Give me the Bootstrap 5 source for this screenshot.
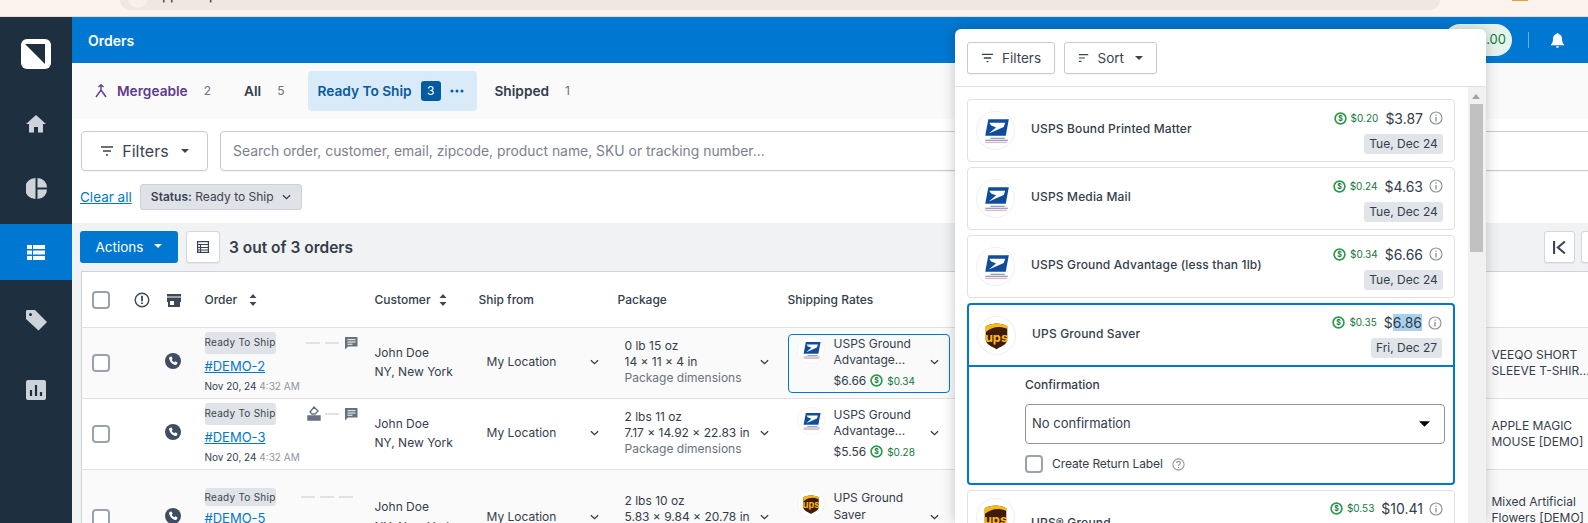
<!DOCTYPE html>
<html lang="en">
<head>
<meta charset="utf-8">
<title>Orders</title>
<link href="https://cdn.jsdelivr.net/npm/bootstrap@5.3.0/dist/css/bootstrap.min.css" rel="stylesheet">
<style>
html,body{height:523px;overflow:hidden}
body{position:relative;font-family:Inter,"Liberation Sans",sans-serif;font-size:12px;color:#333d4b;background:#fff}
.vq-chrome{height:17px;background:#fdf3ee;border-bottom:1px solid #e9dcd4;overflow:hidden;padding-left:120px}
.vq-addr{height:10px;width:1320px;flex:none;background:#f0e6e2;border-radius:0 0 12px 12px;overflow:hidden;padding-left:8px;color:#222;font-size:13px;line-height:14px}
.vq-addr-dot{width:20px;height:20px;border-radius:50%;background:#f7f0ec;margin:-12px 7px 0 0;flex:none}
.vq-addr-text{display:block;margin-top:-12px}
.vq-ext{width:16px;height:1px;background:#ef9a3c;margin-left:72px}
.vq-shell{height:506px}
.vq-side{width:72px;flex:none;background:#1e3040;color:#ced3d9;padding-top:22px}
.vq-logo{width:30px;height:30px;background:#fff;border-radius:6px;margin:0 auto 27px}
.vq-nav{height:56px;margin-bottom:8px}
.vq-nav-active{background:#0078d2;color:#fff}
.vq-nav-tag{margin-top:4px;margin-bottom:14px}
.vq-main{flex:1 1 auto;min-width:0;overflow:hidden}
.vq-main>*{flex:none}
.vq-top{height:46px;background:#0078d2;color:#fff;padding:0 24px 0 16px}
.vq-title{font-size:14px;font-weight:600}
.vq-wallet{width:68px;height:32px;background:#e6f4ec;border-radius:16px;color:#137a3c;font-size:13px;padding-right:6px}
.vq-sep{width:1px;height:16px;background:#6ab0e4;margin:0 22px 0 16px}
.vq-tabs{height:56px;background:#fafafa;padding:8px 0 8px 23px;font-size:13.7px;font-weight:600;white-space:nowrap}
.vq-tab-count{font-weight:400;color:#69727e;font-size:12px;margin-left:16px}
.vq-merge{color:#5f3b8e}
.vq-merge-icon{margin-right:10px;flex:none}
.vq-tab-all{margin-left:33px}
.vq-tab-on{width:169px;height:40px;background:#d9eaf8;border-radius:4px;color:#085a9e;padding:0 14px 0 9px;margin:0 17px 0 24px}
.vq-tab-badge{width:20px;height:20px;background:#005ba1;color:#fff;border-radius:3px;font-weight:400;font-size:12px;margin-left:9px;flex:none}
.vq-dots{margin-left:9px;flex:none}
.vq-search{padding:12px 0 0 9px;height:65px;margin-right:-6px}
.vq-filter{width:127px;height:40px;background:#fff;border:1px solid #c7cbd1;border-radius:4px;font-size:16px;color:#3b4452;box-shadow:0 1px 1px rgba(0,0,0,.04);padding:0;flex:none}
.vq-input{height:40px;margin-left:12px;border:1px solid #c7cbd1;border-radius:4px;font-size:13.9px;padding:0 12px;box-shadow:0 1px 1px rgba(0,0,0,.04);width:auto;min-width:0}
.vq-input::placeholder{color:#7b828c}
.vq-chips{height:39px;padding:0 0 13px 8px}
.vq-clear{color:#0078d2;font-size:13.5px;margin-right:8px}
.vq-chip{height:26px;width:162px;background:#dfe2e6;border:1px solid #ccd0d5;border-radius:3px;font-size:12px;color:#3a4350;padding:0}
.vq-bar{height:48px;background:#f1f2f4;padding:8px 0 0 8px}
.vq-actions{width:98px;height:32px;background:#0078d2;border:0;color:#fff;font-size:13.5px;border-radius:3px;padding:0}
.vq-actions::after{margin-left:11px}
.vq-iconbtn{width:34px;height:32px;background:#fff;border:1px solid #d3d6db;border-radius:3px;padding:0;margin-left:8px;color:#3b4452;box-shadow:0 1px 1px rgba(0,0,0,.06);flex:none}
.vq-iconbtn-r{width:31px;margin-left:6px}
.vq-iconbtn-last{margin-right:-24px}
.vq-count{font-size:15.5px;font-weight:600;margin:0 0 7px 9px;color:#333d4b}
.vq-tablewrap{padding-left:9px;background:#f1f2f4}
.vq-table{table-layout:fixed;width:1623px;margin:0;font-size:12px;color:#333d4b;background:#fff;border-top:1px solid #ced2d8;border-left:1px solid #ced2d8}
.vq-table th,.vq-table td{padding:0 8px;vertical-align:middle;border-bottom:1px solid #dfe1e5;font-weight:500;box-shadow:none}
.vq-table th{height:56px;font-size:12px}
.vq-table th.vq-th-ship{padding-left:7px}
.vq-table td.vq-cell-phone{padding:0 0 0 6px}
.vq-table td.vq-cell-cb,.vq-table th.vq-cell-cb{padding:0 0 0 10px}
.vq-row td{height:71px;background:#fff}
.vq-row-odd td{background:#fafafa}
.vq-row-tall td{height:96px}
.form-check-input.vq-check{width:18px;height:18px;margin:0;border:2px solid #9aa2ad;border-radius:4px;background-color:#fff;flex:none}
.vq-status{height:22px;width:71px;background:#e0e3e7;border-radius:3px;font-size:10px;font-weight:400;color:#3a4350;letter-spacing:.25px;white-space:nowrap;flex:none}
.vq-status-low{height:18px}
.vq-id{color:#0078d2;font-size:13px;font-weight:400;line-height:24px}
.vq-date{font-size:10px;font-weight:400;line-height:14px;margin:1px 0 2px;white-space:nowrap}
.vq-date span{color:#8f96a0}
.vq-dash{width:14px;height:2px;background:#dfe2e6;margin-right:5px}
.vq-marks{width:153px}
.vq-stack{line-height:19.5px;font-weight:400;font-size:12px;padding-bottom:2px}
.vq-pkg{line-height:16px;font-weight:400;font-size:12px;padding:0 3px 2px 7px;white-space:nowrap}
.vq-muted{color:#69727e}
.vq-from{padding:0 3px 2px 7px;font-weight:400}
.vq-rate{width:162px;height:59px;padding:1px 10px 3px 8px;border:1px solid transparent;border-radius:4px;font-weight:400}
.vq-rate-on{border-color:#0078d2}
.vq-rate-logo{width:28px;flex:none;margin-right:9px}
.vq-rate-name{line-height:16.5px;font-size:12px}
.vq-rate-price{font-size:12px;line-height:18px;margin-top:3px}
.vq-save{color:#13793a;font-size:10px;font-weight:400}
.vq-table td.vq-product{font-weight:400;font-size:12px;line-height:16px;padding-left:7px}
.vq-pop{position:absolute;left:955px;top:29px;width:531px;height:494px;background:#fff;border-radius:6px 6px 0 0;box-shadow:0 0 14px rgba(0,0,0,.22);overflow:hidden}
.vq-pop-head{height:58px;flex:none;padding:13px 12px 0;border-bottom:1px solid #dfe1e5}
.vq-pop-btn{height:32px;background:#fff;border:1px solid #c7cbd1;border-radius:3px;font-size:13.5px;color:#3b4452;padding:0;box-shadow:0 1px 1px rgba(0,0,0,.05)}
.vq-pop-f{width:88px;margin-right:9px}
.vq-pop-s{width:93px}
.vq-pop-list{width:513px;flex:none;padding:12px 13px 0 12px}
.vq-card{height:63px;border:1px solid #dfe1e5;border-radius:4px;margin-bottom:5px;padding:7px 11px 7px 8px;font-size:12px;font-weight:500}
.vq-card-on{height:182px;border:2px solid #0078d2;padding:0}
.vq-card-top{height:62px;padding:6px 11px 6px 8px;border-bottom:2px solid #0078d2}
.vq-card-next{padding-top:7px}
.vq-card-logo{width:39px;height:39px;flex:none;margin-right:16px}
.vq-name{flex:1 1 auto;letter-spacing:.15px;margin-bottom:3px}
.vq-price{font-size:14px;font-weight:400;margin:0 6px 0 7px}
.vq-sel{background:#a8d1ee}
.vq-chipdate{height:20px;width:79px;background:#e1e4e8;border-radius:3px;font-size:12px;font-weight:400;margin-top:5px}
.vq-chipdate-f{width:71px}
.vq-conf{padding:9px 8px 0 56px}
.vq-conf-label{font-size:12px;font-weight:500;height:28px}
.form-select.vq-select{height:40px;border:1px solid #8e96a0;border-radius:4px;font-size:13px;padding:0 6px;color:#333d4b;background-image:url("data:image/svg+xml,%3Csvg xmlns='http://www.w3.org/2000/svg' viewBox='0 0 12 6'%3E%3Cpath d='M0 0h12L6 6z' fill='%23000'/%3E%3C/svg%3E");background-size:11px 6px;background-position:right 14px center}
.vq-return{margin-top:11px;font-weight:400;font-size:12px;letter-spacing:-.1px}
.vq-return label{margin:0 9px 0 9px}
.vq-track{width:18px;flex:none;background:#f1f1f1;position:relative;padding:17px 3px 0 2px}
.vq-thumb{height:148px;background:#c1c1c1}
.vq-arrow{position:absolute;left:4px;top:7px;border:4px solid transparent;border-top:0;border-bottom:5px solid #a3a3a3}
.vq-defs{position:absolute;width:0;height:0}
</style>
</head>
<body>
<svg class="vq-defs" aria-hidden="true">
  <symbol id="i-usps" viewBox="0 0 38 38">
    <circle cx="19" cy="19" r="18.5" fill="#fff" stroke="#f0f0f0"/>
    <path d="M12 8h20l-3 16H9z" fill="#0f4d9c"/>
    <path d="M13 11.500h15.500l-1.500 4-14.500 6.500 7-6-5-2z" fill="#fff"/>
    <path d="M14 26.500h14M9 28.500h22" stroke="#7183ad" stroke-width="1"/>
    <path d="M9 30.500h21" stroke="#e39cab" stroke-width="1"/>
  </symbol>
  <symbol id="i-ups" viewBox="0 0 38 38">
    <circle cx="19" cy="19" r="18.500" fill="#fff" stroke="#f0f0f0"/>
    <path d="M8.500 10c6.500-3.500 14.500-3.500 21 0v13c0 5-6.500 7-10.500 9.500-4-2.500-10.500-4.500-10.500-9.500z" fill="#3e1c09"/>
    <path d="M8.500 10c6.500-3.500 14.500-3.500 21 0v2.500c-7.500-3-14-2.500-21 3z" fill="#fdb813"/>
    <text x="19" y="25" font-family="Inter,sans-serif" font-size="12.500" font-weight="700" fill="#fdb813" text-anchor="middle">ups</text>
  </symbol>
  <symbol id="i-save" viewBox="0 0 14 14">
    <circle cx="7" cy="7" r="5.800" fill="#fff" stroke="#2a9a4e" stroke-width="1.800"/>
    <text x="7" y="9.700" font-family="Inter,sans-serif" font-size="7.500" font-weight="700" fill="#13793a" text-anchor="middle">$</text>
  </symbol>
  <symbol id="i-info" viewBox="0 0 14 14">
    <circle cx="7" cy="7" r="6" fill="none" stroke="#8f96a0" stroke-width="1.200"/>
    <path d="M7 6v4.500M7 3.400v1.300" stroke="#8f96a0" stroke-width="1.400"/>
  </symbol>
  <symbol id="i-chev" viewBox="0 0 10 6"><path d="M1 1l4 3.800L9 1" fill="none" stroke="currentColor" stroke-width="1.500"/></symbol>
  <symbol id="i-phone" viewBox="0 0 16 16">
    <circle cx="8" cy="8" r="8" fill="#3f4d63"/>
    <path d="M5 3.800l1.500-.4 1.200 2.300-1 1c.5 1 1.500 2 2.600 2.600l1-1 2.200 1.200-.4 1.500c-.3.900-1.300 1.200-2.200.9C7 11 5 9 4.200 6c-.3-.9 0-1.900.8-2.200z" fill="#fff"/>
  </symbol>
  <symbol id="i-chat" viewBox="0 0 14 14">
    <path d="M1 1h12.500v9.500H4L1 13.500z" fill="#67717f"/>
    <path d="M3.500 3.700h8M3.500 6h8M3.500 8.200h5" stroke="#fff" stroke-width="1"/>
  </symbol>
  <symbol id="i-lines" viewBox="0 0 14 10"><path d="M1 1h12M3 5h8M6 9h2" stroke="currentColor" stroke-width="1.400"/></symbol>
  <symbol id="i-sortl" viewBox="0 0 14 10"><path d="M1 1h11M1 5h7M1 9h3" stroke="currentColor" stroke-width="1.400"/></symbol>
  <symbol id="i-sort" viewBox="0 0 8 12"><path d="M4 0l3.500 4h-7zM4 12l3.500-4h-7z" fill="#3f4857"/></symbol>
</svg>

<div class="vq-chrome d-flex align-items-start">
  <div class="vq-addr d-flex"><span class="vq-addr-dot"></span><span class="vq-addr-text">app.veeqo.com</span></div>
  <span class="vq-ext"></span>
</div>

<div class="vq-shell d-flex">
  <nav class="vq-side d-flex flex-column">
    <div class="vq-logo d-flex align-items-center justify-content-center">
      <svg width="24" height="24" viewBox="0 0 24 24"><path d="M1 2h20v20z" fill="#1e3040"/></svg>
    </div>
    <div class="vq-nav d-flex align-items-center justify-content-center">
      <svg width="20" height="18" viewBox="0 0 20 18" fill="currentColor"><path d="M10 0L0 9h3v8.500h5V12h4v5.500h5V9h3z"/></svg>
    </div>
    <div class="vq-nav d-flex align-items-center justify-content-center">
      <svg width="21" height="21" viewBox="0 0 21 21" fill="currentColor"><path d="M9.500 0v21a10.500 10.500 0 0 1 0-21zM11.500 0a9.500 9.500 0 0 1 9.500 9.500h-9.500zM11.500 11.500H21a9.500 9.500 0 0 1-9.500 9.500z"/></svg>
    </div>
    <div class="vq-nav vq-nav-active d-flex align-items-center justify-content-center">
      <svg width="18" height="15" viewBox="0 0 18 15" fill="currentColor"><path d="M0 0h5v4H0zM6 0h12v4H6zM0 5.500h5v4H0zM6 5.500h12v4H6zM0 11h5v4H0zM6 11h12v4H6z"/></svg>
    </div>
    <div class="vq-nav vq-nav-tag d-flex align-items-center justify-content-center">
      <svg width="21" height="21" viewBox="0 0 21 21" fill="currentColor"><path d="M0 1.500C0 .5.500 0 1.500 0H9l12 12-8.500 8.500L0 9zM4.500 3a1.500 1.500 0 1 0 0 3 1.500 1.500 0 0 0 0-3z"/></svg>
    </div>
    <div class="vq-nav d-flex align-items-center justify-content-center">
      <svg width="20" height="20" viewBox="0 0 20 20"><rect width="20" height="20" rx="2" fill="currentColor"/><path d="M5 10v6M10 5v11M15 12v4" stroke="#1e3040" stroke-width="2.200"/></svg>
    </div>
  </nav>

  <main class="vq-main d-flex flex-column">
    <header class="vq-top d-flex align-items-center">
      <span class="vq-title flex-grow-1">Orders</span>
      <span class="vq-wallet d-flex align-items-center justify-content-end">$0.00</span>
      <span class="vq-sep"></span>
      <svg width="13" height="15" viewBox="0 0 13 15" fill="#fff"><path d="M6.500 0c.7 0 1 .5 1 1.100C10 1.600 11 3.600 11 6c0 3 1 4.500 2 5.500v.8H0v-.8C1 10.500 2 9 2 6c0-2.400 1-4.400 3.500-4.900C5.500.5 5.800 0 6.500 0zM5 13.200h3a1.500 1.500 0 0 1-3 0z"/></svg>
    </header>

    <div class="vq-tabs d-flex align-items-center">
      <svg class="vq-merge vq-merge-icon" width="12" height="14" viewBox="0 0 12 14" fill="none" stroke="currentColor" stroke-width="1.400"><path d="M6 1v5L1 13M6 6l5 7M3.500 3L6 .8 8.500 3"/></svg>
      <span class="vq-merge">Mergeable</span>
      <span class="vq-tab-count">2</span>
      <span class="vq-tab-all">All</span>
      <span class="vq-tab-count">5</span>
      <div class="vq-tab-on d-flex align-items-center">
        <span>Ready To Ship</span>
        <span class="vq-tab-badge d-flex align-items-center justify-content-center">3</span>
        <svg class="vq-dots" width="14" height="4" viewBox="0 0 14 4" fill="#085a9e"><circle cx="2" cy="2" r="1.500"/><circle cx="7" cy="2" r="1.500"/><circle cx="12" cy="2" r="1.500"/></svg>
      </div>
      <span>Shipped</span>
      <span class="vq-tab-count">1</span>
    </div>

    <div class="vq-search d-flex">
      <button type="button" class="btn vq-filter dropdown-toggle d-flex align-items-center justify-content-center gap-2">
        <svg width="14" height="10"><use href="#i-lines"/></svg><span>Filters</span>
      </button>
      <input class="form-control vq-input flex-grow-1" type="text" placeholder="Search order, customer, email, zipcode, product name, SKU or tracking number...">
    </div>

    <div class="vq-chips d-flex align-items-center">
      <a href="#" class="vq-clear">Clear all</a>
      <button type="button" class="btn vq-chip d-flex align-items-center justify-content-center gap-2">
        <span><b class="fw-semibold">Status:</b> Ready to Ship</span>
        <svg width="9" height="6"><use href="#i-chev"/></svg>
      </button>
    </div>

    <div class="vq-bar d-flex align-items-start">
      <button type="button" class="btn vq-actions dropdown-toggle">Actions</button>
      <button type="button" class="btn vq-iconbtn d-flex align-items-center justify-content-center">
        <svg width="12" height="12" viewBox="0 0 12 12" fill="none" stroke="currentColor" stroke-width="1.200"><rect x=".6" y=".6" width="10.800" height="10.800"/><path d="M.6 3.500h10.800M.6 6.500h10.800M.6 9h10.800M3.500 3.500v8"/></svg>
      </button>
      <span class="vq-count align-self-center">3 out of 3 orders</span>
      <span class="flex-grow-1"></span>
      <button type="button" class="btn vq-iconbtn vq-iconbtn-r d-flex align-items-center justify-content-center">
        <svg width="13" height="13" viewBox="0 0 12 12" fill="none" stroke="currentColor" stroke-width="1.900"><path d="M1 0v12M11 .5L4.500 6l6.500 5.500"/></svg>
      </button>
      <button type="button" class="btn vq-iconbtn vq-iconbtn-r vq-iconbtn-last"></button>
    </div>

    <div class="vq-tablewrap">
      <table class="table vq-table">
        <colgroup><col style="width:44px"><col style="width:33px"><col style="width:38px"><col style="width:170px"><col style="width:105px"><col style="width:138px"><col style="width:170px"><col style="width:705px"><col style="width:220px"></colgroup>
        <thead>
          <tr>
            <th class="vq-cell-cb"><input class="form-check-input vq-check d-block" type="checkbox" aria-label="Select all"></th>
            <th class="ps-2 pe-0"><svg width="16" height="16" viewBox="0 0 16 16" fill="none" stroke="#3f4857" stroke-width="1.400"><circle cx="8" cy="8" r="6.800"/><path d="M8 3.800v5.400M8 10.500v1.600" stroke-width="1.800"/></svg></th>
            <th class="ps-2 pe-0"><svg width="14" height="13" viewBox="0 0 14 13" fill="#3f4857"><path d="M0 0h14v2.500H0zM0 3.500h14V8h-1v5H1V8H0zM3 7v4h4V7z"/></svg></th>
            <th><span class="d-flex align-items-center gap-2">Order <svg width="8" height="12" class="ms-1"><use href="#i-sort"/></svg></span></th>
            <th><span class="d-flex align-items-center gap-2">Customer <svg width="8" height="12"><use href="#i-sort"/></svg></span></th>
            <th class="vq-th-ship">Ship from</th>
            <th>Package</th>
            <th>Shipping Rates</th>
            <th></th>
          </tr>
        </thead>
        <tbody>
          <tr class="vq-row vq-row-odd">
            <td class="vq-cell-cb"><input class="form-check-input vq-check d-block" type="checkbox" aria-label="Select DEMO-2"></td>
            <td></td>
            <td class="vq-cell-phone"><svg width="16" height="16" class="d-block mb-1"><use href="#i-phone"/></svg></td>
            <td>
              <div class="vq-marks d-flex align-items-center">
                <span class="vq-status d-flex align-items-center justify-content-center">Ready To Ship</span>
                <span class="flex-grow-1"></span><span class="vq-dash"></span><span class="vq-dash"></span><svg width="14" height="14"><use href="#i-chat"/></svg>
              </div>
              <a href="#" class="vq-id d-block">#DEMO-2</a>
              <div class="vq-date">Nov 20, 24 <span>4:32 AM</span></div>
            </td>
            <td><div class="vq-stack">John Doe<br>NY, New York</div></td>
            <td><div class="vq-from d-flex align-items-center justify-content-between"><span>My Location</span><svg width="9" height="6"><use href="#i-chev"/></svg></div></td>
            <td><div class="vq-pkg d-flex align-items-center justify-content-between"><span>0 lb 15 oz<br>14 × 11 × 4 in<br><span class="vq-muted">Package dimensions</span></span><svg width="9" height="6"><use href="#i-chev"/></svg></div></td>
            <td>
              <div class="vq-rate vq-rate-on d-flex">
                <svg class="vq-rate-logo" height="28"><use href="#i-usps"/></svg>
                <div class="flex-grow-1"><div class="vq-rate-name">USPS Ground<br>Advantage...</div><div class="vq-rate-price d-flex align-items-center"><span>$6.66</span><svg width="13" height="13" class="mx-1"><use href="#i-save"/></svg><span class="vq-save">$0.34</span></div></div>
                <svg width="9" height="6" class="align-self-center"><use href="#i-chev"/></svg>
              </div>
            </td>
            <td class="vq-product">VEEQO SHORT<br>SLEEVE T-SHIR...</td>
          </tr>
          <tr class="vq-row">
            <td class="vq-cell-cb"><input class="form-check-input vq-check d-block" type="checkbox" aria-label="Select DEMO-3"></td>
            <td></td>
            <td class="vq-cell-phone"><svg width="16" height="16" class="d-block mb-1"><use href="#i-phone"/></svg></td>
            <td>
              <div class="vq-marks d-flex align-items-center">
                <span class="vq-status d-flex align-items-center justify-content-center">Ready To Ship</span>
                <span class="flex-grow-1"></span>
                <svg width="14" height="15" viewBox="0 0 14 15" fill="none" stroke="#67717f" stroke-width="1.400" class="me-1"><path d="M7 1l4 4-3 3H5L3 6z"/><path d="M1 10h12v4H1z" fill="#67717f"/></svg>
                <span class="vq-dash"></span><svg width="14" height="14"><use href="#i-chat"/></svg>
              </div>
              <a href="#" class="vq-id d-block">#DEMO-3</a>
              <div class="vq-date">Nov 20, 24 <span>4:32 AM</span></div>
            </td>
            <td><div class="vq-stack">John Doe<br>NY, New York</div></td>
            <td><div class="vq-from d-flex align-items-center justify-content-between"><span>My Location</span><svg width="9" height="6"><use href="#i-chev"/></svg></div></td>
            <td><div class="vq-pkg d-flex align-items-center justify-content-between"><span>2 lbs 11 oz<br>7.17 × 14.92 × 22.83 in<br><span class="vq-muted">Package dimensions</span></span><svg width="9" height="6"><use href="#i-chev"/></svg></div></td>
            <td>
              <div class="vq-rate d-flex">
                <svg class="vq-rate-logo" height="28"><use href="#i-usps"/></svg>
                <div class="flex-grow-1"><div class="vq-rate-name">USPS Ground<br>Advantage...</div><div class="vq-rate-price d-flex align-items-center"><span>$5.56</span><svg width="13" height="13" class="mx-1"><use href="#i-save"/></svg><span class="vq-save">$0.28</span></div></div>
                <svg width="9" height="6" class="align-self-center"><use href="#i-chev"/></svg>
              </div>
            </td>
            <td class="vq-product">APPLE MAGIC<br>MOUSE [DEMO]</td>
          </tr>
          <tr class="vq-row vq-row-odd vq-row-tall">
            <td class="vq-cell-cb"><input class="form-check-input vq-check d-block" type="checkbox" aria-label="Select DEMO-5"></td>
            <td></td>
            <td class="vq-cell-phone"><svg width="16" height="16" class="d-block mb-1"><use href="#i-phone"/></svg></td>
            <td>
              <div class="vq-marks d-flex align-items-center">
                <span class="vq-status vq-status-low d-flex align-items-center justify-content-center">Ready To Ship</span>
                <span class="flex-grow-1"></span><span class="vq-dash"></span><span class="vq-dash"></span><span class="vq-dash"></span>
              </div>
              <a href="#" class="vq-id d-block">#DEMO-5</a>
              <div class="vq-date">Nov 20, 24 <span>4:32 AM</span></div>
            </td>
            <td><div class="vq-stack">John Doe<br>NY, New York</div></td>
            <td><div class="vq-from d-flex align-items-center justify-content-between"><span>My Location</span><svg width="9" height="6"><use href="#i-chev"/></svg></div></td>
            <td><div class="vq-pkg d-flex align-items-center justify-content-between"><span>2 lbs 10 oz<br>5.83 × 9.84 × 20.78 in<br><span class="vq-muted">Package dimensions</span></span><svg width="9" height="6"><use href="#i-chev"/></svg></div></td>
            <td>
              <div class="vq-rate d-flex">
                <svg class="vq-rate-logo" height="28"><use href="#i-ups"/></svg>
                <div class="flex-grow-1"><div class="vq-rate-name">UPS Ground<br>Saver</div></div>
                <svg width="9" height="6" class="align-self-center"><use href="#i-chev"/></svg>
              </div>
            </td>
            <td class="vq-product">Mixed Artificial<br>Flowers [DEMO]<br>Crystal</td>
          </tr>
        </tbody>
      </table>
    </div>
  </main>
</div>

<aside class="vq-pop d-flex flex-column">
  <div class="vq-pop-head d-flex align-items-start">
    <button type="button" class="btn vq-pop-btn vq-pop-f d-flex align-items-center justify-content-center gap-2"><svg width="13" height="10"><use href="#i-lines"/></svg><span>Filters</span></button>
    <button type="button" class="btn vq-pop-btn vq-pop-s dropdown-toggle d-flex align-items-center justify-content-center gap-2"><svg width="12" height="10"><use href="#i-sortl"/></svg><span>Sort</span></button>
  </div>
  <div class="d-flex flex-grow-1 overflow-hidden">
    <div class="vq-pop-list">
      <div class="vq-card d-flex align-items-center">
        <svg class="vq-card-logo"><use href="#i-usps"/></svg>
        <span class="vq-name">USPS Bound Printed Matter</span>
        <div class="d-flex flex-column align-items-end">
          <div class="d-flex align-items-center"><svg width="13" height="13" class="me-1"><use href="#i-save"/></svg><span class="vq-save">$0.20</span><span class="vq-price">$3.87</span><svg width="14" height="14"><use href="#i-info"/></svg></div>
          <span class="vq-chipdate d-flex align-items-center justify-content-center">Tue, Dec 24</span>
        </div>
      </div>
      <div class="vq-card d-flex align-items-center">
        <svg class="vq-card-logo"><use href="#i-usps"/></svg>
        <span class="vq-name">USPS Media Mail</span>
        <div class="d-flex flex-column align-items-end">
          <div class="d-flex align-items-center"><svg width="13" height="13" class="me-1"><use href="#i-save"/></svg><span class="vq-save">$0.24</span><span class="vq-price">$4.63</span><svg width="14" height="14"><use href="#i-info"/></svg></div>
          <span class="vq-chipdate d-flex align-items-center justify-content-center">Tue, Dec 24</span>
        </div>
      </div>
      <div class="vq-card d-flex align-items-center">
        <svg class="vq-card-logo"><use href="#i-usps"/></svg>
        <span class="vq-name">USPS Ground Advantage (less than 1lb)</span>
        <div class="d-flex flex-column align-items-end">
          <div class="d-flex align-items-center"><svg width="13" height="13" class="me-1"><use href="#i-save"/></svg><span class="vq-save">$0.34</span><span class="vq-price">$6.66</span><svg width="14" height="14"><use href="#i-info"/></svg></div>
          <span class="vq-chipdate d-flex align-items-center justify-content-center">Tue, Dec 24</span>
        </div>
      </div>
      <div class="vq-card vq-card-on">
        <div class="vq-card-top d-flex align-items-center">
          <svg class="vq-card-logo"><use href="#i-ups"/></svg>
          <span class="vq-name">UPS Ground Saver</span>
          <div class="d-flex flex-column align-items-end">
            <div class="d-flex align-items-center"><svg width="13" height="13" class="me-1"><use href="#i-save"/></svg><span class="vq-save">$0.35</span><span class="vq-price">$<span class="vq-sel">6.86</span></span><svg width="14" height="14"><use href="#i-info"/></svg></div>
            <span class="vq-chipdate vq-chipdate-f d-flex align-items-center justify-content-center">Fri, Dec 27</span>
          </div>
        </div>
        <div class="vq-conf">
          <div class="vq-conf-label">Confirmation</div>
          <select class="form-select vq-select" aria-label="Confirmation"><option>No confirmation</option></select>
          <div class="vq-return d-flex align-items-center">
            <input class="form-check-input vq-check" type="checkbox" id="vq-ret">
            <label for="vq-ret">Create Return Label</label>
            <svg width="13" height="13" viewBox="0 0 14 14" fill="none" stroke="#8f96a0" stroke-width="1.200"><circle cx="7" cy="7" r="6"/><path d="M5 5.500c0-2.500 4-2.500 4 0 0 1.500-2 1.500-2 3M7 9.700v1.300"/></svg>
          </div>
        </div>
      </div>
      <div class="vq-card vq-card-next d-flex align-items-start">
        <svg class="vq-card-logo"><use href="#i-ups"/></svg>
        <span class="vq-name mt-3">UPS® Ground</span>
        <div class="d-flex flex-column align-items-end">
          <div class="d-flex align-items-center"><svg width="13" height="13" class="me-1"><use href="#i-save"/></svg><span class="vq-save">$0.53</span><span class="vq-price">$10.41</span><svg width="14" height="14"><use href="#i-info"/></svg></div>
        </div>
      </div>
    </div>
    <div class="vq-track"><span class="vq-arrow"></span><div class="vq-thumb"></div></div>
  </div>
</aside>
<script src="https://cdn.jsdelivr.net/npm/bootstrap@5.3.0/dist/js/bootstrap.bundle.min.js"></script>
</body>
</html>
